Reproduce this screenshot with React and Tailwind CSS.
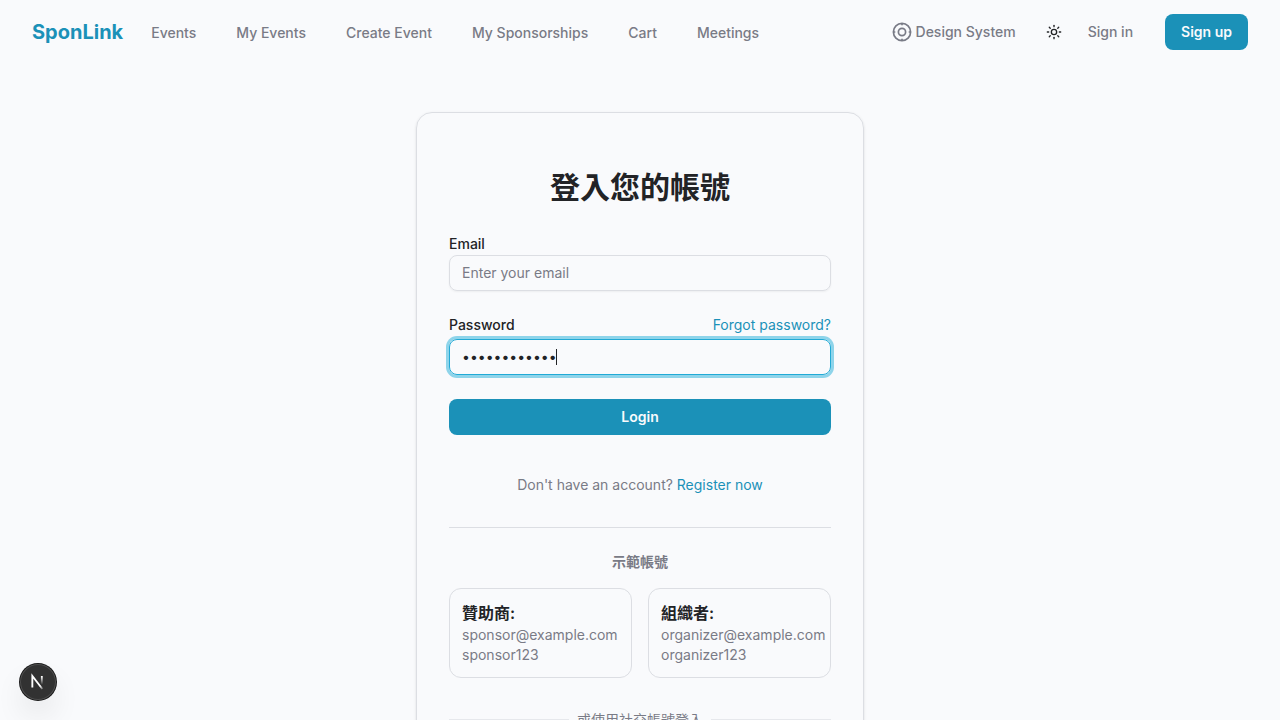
import React from "react";
import { Sun } from "lucide-react";

const NAV = ["Events", "My Events", "Create Event", "My Sponsorships", "Cart", "Meetings"];

const DEMO_ACCOUNTS = [
  { role: "贊助商:", email: "sponsor@example.com", password: "sponsor123" },
  { role: "組織者:", email: "organizer@example.com", password: "organizer123" },
];

function DesignIcon() {
  return (
    <svg className="size-5" viewBox="0 0 20 20" fill="none" stroke="currentColor" strokeWidth="1.7" aria-hidden="true">
      <circle cx="10" cy="10" r="8.6" />
      <circle cx="10" cy="10" r="3.6" />
      <path d="M10 1.4v1.9M10 16.7v1.9M1.4 10h1.9M16.7 10h1.9" />
    </svg>
  );
}

function Header() {
  return (
    <header className="flex h-16 shrink-0 items-center justify-between px-8 text-sm font-medium text-[#797b86]">
      <div className="flex items-center gap-7">
        <a href="#home" className="text-xl font-bold text-[#1b91b8]">SponLink</a>
        <nav className="flex gap-10 pt-0.5">
          {NAV.map((item) => (
            <a key={item} href="#nav">{item}</a>
          ))}
        </nav>
      </div>
      <div className="flex items-center">
        <a href="#design" className="mr-5 flex items-center gap-1">
          <DesignIcon />
          Design System
        </a>
        <button type="button" aria-label="Toggle theme" className="flex size-9 items-center justify-center text-[#222326]">
          <Sun className="size-4" />
        </button>
        <a href="#signin" className="px-4">Sign in</a>
        <a href="#signup" className="ml-4 flex h-9 items-center rounded-lg bg-[#1b91b8] px-4 font-semibold text-[#f9fafc]">
          Sign up
        </a>
      </div>
    </header>
  );
}

function LoginCard() {
  return (
    <section className="w-full max-w-md rounded-2xl border border-[#dcdee3] px-8 pt-14 pb-14 shadow-sm">
      <h1 className="text-center text-3xl font-bold">登入您的帳號</h1>
      <form className="mt-8" onSubmit={(e) => e.preventDefault()}>
        <label htmlFor="email" className="block text-sm leading-none font-medium">Email</label>
        <input
          id="email"
          type="email"
          placeholder="Enter your email"
          className="mt-1 block h-9 w-full rounded-lg border border-[#dcdee3] bg-transparent px-3 pb-0.5 text-sm shadow-xs outline-none placeholder:text-[#797b86]"
        />
        <div className="mt-6 flex items-center justify-between text-sm">
          <label htmlFor="password" className="font-medium">Password</label>
          <a href="#forgot" className="text-[#1b91b8]">Forgot password?</a>
        </div>
        <div className="relative mt-1">
          <input
            id="password"
            type="password"
            autoFocus
            defaultValue="organizer123"
            className="block h-9 w-full rounded-lg border border-[#22aad6] bg-transparent px-3 pb-0.5 text-sm caret-transparent ring-3 ring-[#8ed4ea] outline-none"
          />
          <span aria-hidden="true" className="pointer-events-none absolute top-2.5 left-[107px] h-4 w-px bg-[#222326]" />
        </div>
        <button type="submit" className="mt-6 h-9 w-full rounded-lg bg-[#1b91b8] text-sm font-semibold text-[#f9fafc]">
          Login
        </button>
      </form>
      <p className="mt-10 text-center text-sm text-[#797b86]">
        Don't have an account?{" "}
        <a href="#register" className="text-[#1b91b8]">Register now</a>
      </p>
      <div className="mt-8 border-t border-[#dcdee3] pt-6">
        <h2 className="text-center text-sm font-semibold text-[#797b86]">示範帳號</h2>
        <div className="mt-4 grid grid-cols-2 gap-4">
          {DEMO_ACCOUNTS.map((account) => (
            <button key={account.email} type="button" className="min-w-0 rounded-xl border border-[#dcdee3] p-3 text-left text-sm text-[#797b86]">
              <span className="block text-base font-semibold text-[#222326]">{account.role}</span>
              <span className="block">{account.email}</span>
              <span className="block">{account.password}</span>
            </button>
          ))}
        </div>
      </div>
      <div className="mt-8 flex items-center gap-2 text-sm text-[#797b86]">
        <span className="h-0.5 flex-1 bg-[#e6e8ec]" />
        或使用社交帳號登入
        <span className="h-0.5 flex-1 bg-[#e6e8ec]" />
      </div>
    </section>
  );
}

function DevBadge() {
  return (
    <button
      type="button"
      aria-label="Open developer tools"
      className="fixed bottom-5 left-5 flex size-9 items-center justify-center rounded-full bg-[#323232] shadow-[0_0_0_1px_#171717,inset_0_0_0_1px_rgba(255,255,255,0.14),0_16px_32px_-8px_rgba(0,0,0,0.24)]"
    >
      <svg className="size-4 overflow-visible" viewBox="0 -1 16 16" fill="none" strokeWidth="1.86" aria-hidden="true">
        <path d="M12.4 14 2.34 1v11.6" stroke="url(#diagonal-fade)" />
        <path d="M11.825 1v11.6" stroke="url(#stem-fade)" />
        <defs>
          <linearGradient id="diagonal-fade" x1="9.96" y1="11.12" x2="15.48" y2="17.97" gradientUnits="userSpaceOnUse">
            <stop stopColor="white" />
            <stop offset="0.6" stopColor="white" stopOpacity="0" />
          </linearGradient>
          <linearGradient id="stem-fade" x1="11.82" y1="1.4" x2="11.79" y2="9.63" gradientUnits="userSpaceOnUse">
            <stop stopColor="white" />
            <stop offset="1" stopColor="white" stopOpacity="0" />
          </linearGradient>
        </defs>
      </svg>
    </button>
  );
}

export default function App() {
  return (
    <div className="flex h-screen flex-col overflow-hidden bg-[#f9fafc] font-['Inter','Noto_Sans_CJK_TC',sans-serif] text-[#222326] antialiased">
      <Header />
      <main className="flex shrink-0 justify-center px-4 py-12">
        <LoginCard />
      </main>
      <DevBadge />
    </div>
  );
}
